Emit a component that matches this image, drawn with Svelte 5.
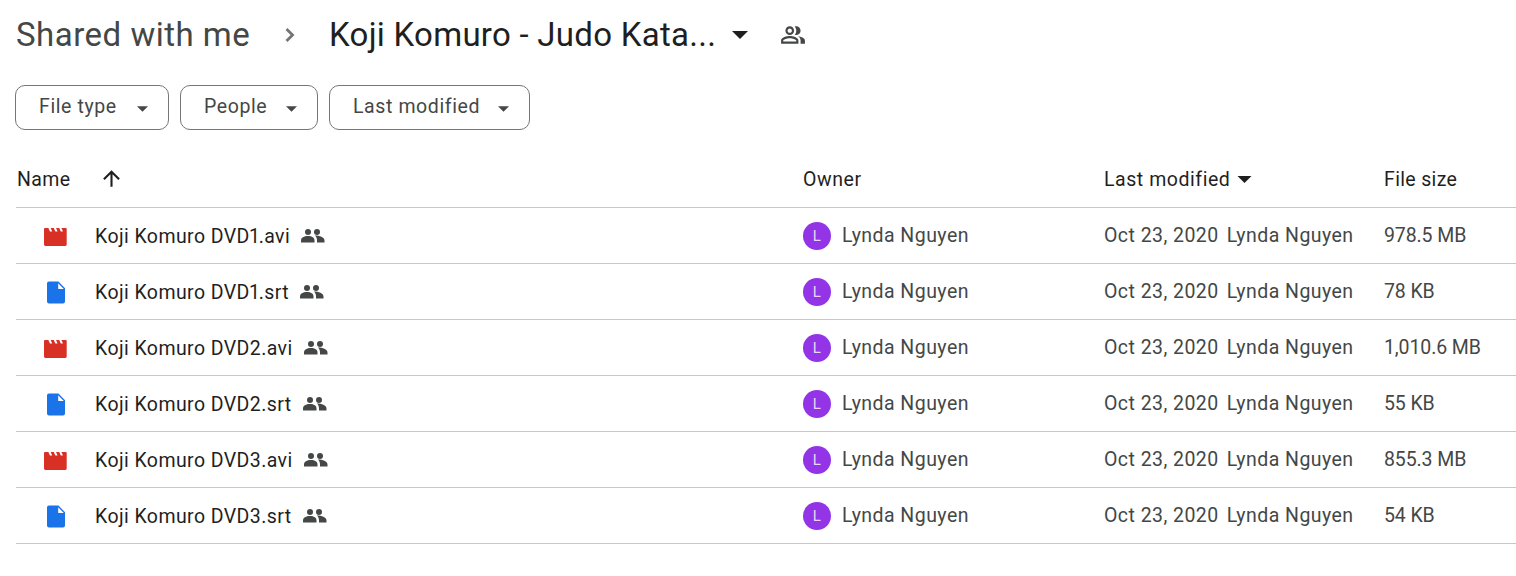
<script lang="ts">
  const filters = ['File type', 'People', 'Last modified']
  const files = [
    { name: 'Koji Komuro DVD1.avi', kind: 'video', size: '978.5 MB' },
    { name: 'Koji Komuro DVD1.srt', kind: 'doc', size: '78 KB' },
    { name: 'Koji Komuro DVD2.avi', kind: 'video', size: '1,010.6 MB' },
    { name: 'Koji Komuro DVD2.srt', kind: 'doc', size: '55 KB' },
    { name: 'Koji Komuro DVD3.avi', kind: 'video', size: '855.3 MB' },
    { name: 'Koji Komuro DVD3.srt', kind: 'doc', size: '54 KB' }
  ]
</script>

<div class="page">
  <div class="crumbs">
    <span class="root">Shared with me</span>
    <svg class="chev" viewBox="0 0 24 24" width="28" height="28"><path d="M9 6.8l5.2 5.2-5.2 5.2" /></svg>
    <span class="current">Koji Komuro - Judo Kata...</span>
    <svg class="caret-big" viewBox="0 0 16 8" width="16" height="8"><path d="M0 0h16L8 8z" /></svg>
    <svg class="people-top" viewBox="0 0 24 24" width="26" height="26">
      <path d="M16.67 13.13C18.04 14.06 19 15.32 19 17v3h4v-3c0-2.18-3.57-3.47-6.33-3.87zM15 12c2.21 0 4-1.79 4-4s-1.79-4-4-4c-.47 0-.91.1-1.33.24C14.5 5.27 15 6.58 15 8s-.5 2.73-1.33 3.76c.42.14.86.24 1.33.24zM9 12c2.21 0 4-1.79 4-4s-1.79-4-4-4-4 1.79-4 4 1.79 4 4 4zm0-6c1.1 0 2 .9 2 2s-.9 2-2 2-2-.9-2-2 .9-2 2-2zM9 13c-2.67 0-8 1.34-8 4v3h16v-3c0-2.66-5.33-4-8-4zm6 5H3v-.99C3.2 16.29 6.3 15 9 15s5.8 1.29 6 2v1z" />
    </svg>
  </div>

  <div class="filters">
    {#each filters as label}
      <button class="chip">
        <span>{label}</span>
        <svg viewBox="0 0 10 5" width="11" height="6"><path d="M0 0h10L5 5z" /></svg>
      </button>
    {/each}
  </div>

  <div class="row head">
    <div class="name-head">
      <span>Name</span>
      <svg viewBox="0 0 24 24" width="25" height="25"><path d="M4 12l1.41 1.41L11 7.83V20h2V7.83l5.58 5.59L20 12l-8-8-8 8z" /></svg>
    </div>
    <div>Owner</div>
    <div class="sorted">
      <span>Last modified</span>
      <svg viewBox="0 0 14 7" width="15" height="7"><path d="M0 0h14L7 7z" /></svg>
    </div>
    <div class="size-head">File size</div>
  </div>

  {#each files as f (f.name)}
    <div class="row item">
      <div class="name">
        <span class="icon">
          {#if f.kind === 'video'}
            <svg viewBox="0 0 24 24" width="24" height="24">
              <path fill="#d93025" d="M1 5a1 1 0 0 1 1-1h20.7a1 1 0 0 1 1 1v15.6a1.4 1.4 0 0 1-1.4 1.4H2.4A1.4 1.4 0 0 1 1 20.6z" />
              <path fill="#fff" d="M5.4 4h2.2l1.6 3.4H7zM10.8 4H13l1.6 3.4h-2.2zM16.2 4h2.2L20 7.4h-2.2z" />
            </svg>
          {:else}
            <svg viewBox="0 0 24 24" width="24" height="24">
              <path fill="#1a73e8" d="M6 1.5h9.5l6.5 6.700v13.300a2 2 0 0 1-2 2H6a2 2 0 0 1-2-2v-18a2 2 0 0 1 2-2z" />
              <path fill="#fff" d="M15.2 3.2 20.8 9h-5.6z" />
            </svg>
          {/if}
        </span>
        <span class="fname">{f.name}</span>
        <svg class="shared" viewBox="0 0 24 14" width="24" height="14">
          <circle cx="7" cy="3" r="3" />
          <circle cx="16" cy="3" r="3" />
          <path d="M0 13.5v-2c0-3 3-4.5 7-4.5s6.5 1.5 6.5 4.5v2z" />
          <path d="M14 6.6c4.500 0 9.500 1.800 9.500 5v1.900h-7.500v-2c0-2-.7-3.700-2-4.900z" />
        </svg>
      </div>
      <div class="owner">
        <span class="avatar">L</span>
        <span>Lynda Nguyen</span>
      </div>
      <div class="modified">
        <span>Oct 23, 2020</span>
        <span>Lynda Nguyen</span>
      </div>
      <div class="size">{f.size}</div>
    </div>
  {/each}
</div>

<style>
  :global(body) { background: #fff; }
  .page { font-family: Roboto, "Noto Sans", sans-serif; color: #444746; padding-left: 16px; }

  .crumbs { display: flex; align-items: center; height: 69px; font-size: 33px; }
  .root { color: #444746; width: 260px; letter-spacing: .5px; }
  .chev { fill: none; stroke: #757575; stroke-width: 2.4; margin-right: 25px; }
  .current { color: #1f1f1f; width: 403px; white-space: nowrap; letter-spacing: .27px; }
  .caret-big { fill: #1f1f1f; margin-right: 32px; }
  .people-top { fill: #444746; }

  .filters { display: flex; gap: 11px; margin: 16px 0 0 -1px; }
  .chip { display: flex; align-items: center; justify-content: space-between; height: 45px; box-sizing: border-box; padding: 0 20px 0 23px; background: #fff; border: 1px solid #747775; border-radius: 10px; font: inherit; font-size: 19.5px; letter-spacing: .6px; color: #444746; }
  .chip span { margin-top: -2px; }
  .chip:nth-child(1) { width: 154px; }
  .chip:nth-child(2) { width: 138px; }
  .chip:nth-child(3) { width: 201px; }
  .chip svg { fill: #444746; margin-top: 2px; }

  .row { display: grid; grid-template-columns: 787px 301px 280px 1fr; align-items: center; font-size: 19.5px; letter-spacing: .45px; border-bottom: 1px solid #c7c7c7; box-sizing: border-box; }
  .head { height: 78px; color: #1f1f1f; padding-top: 22px; letter-spacing: .55px; }
  .item { height: 56px; }

  .name-head { display: flex; align-items: center; gap: 28px; }
  .name-head span { padding-left: 1px; letter-spacing: .4px; }
  .name-head svg { fill: #1f1f1f; margin-top: -2px; }
  .sorted { display: flex; align-items: center; gap: 7px; }
  .sorted svg { fill: #1f1f1f; }
  .size-head { letter-spacing: .35px; }

  .name { display: flex; align-items: center; color: #1f1f1f; letter-spacing: .42px; }
  .fname { margin-top: 2px; font-variant-numeric: proportional-nums; }
  .icon { display: flex; margin-left: 27px; width: 52px; }
  .shared { fill: #444746; margin-left: 11px; }
  .owner { display: flex; align-items: center; gap: 11px; }
  .avatar { display: flex; align-items: center; justify-content: center; width: 28px; height: 28px; border-radius: 50%; background: #9334e6; color: #e9d5fb; font-size: 15px; }
  .modified { display: flex; gap: 8px; }
  .size { letter-spacing: -.1px; }
</style>
